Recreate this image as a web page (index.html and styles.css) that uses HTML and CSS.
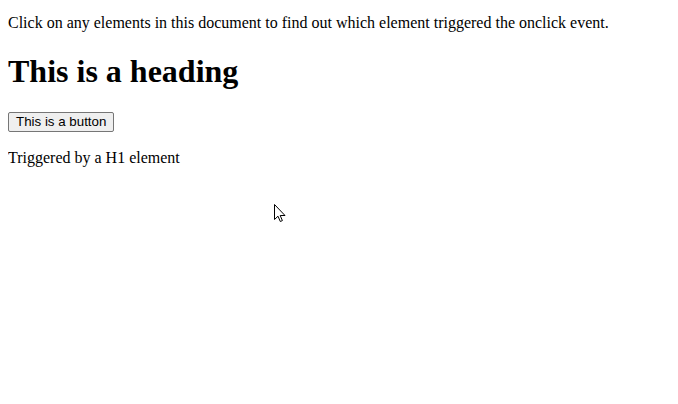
FILE: index.html
```html
<!DOCTYPE html>
<html>
<head>
<meta charset="utf-8">
<link rel="stylesheet" href="styles.css">
</head>
<body class="page">
<p class="intro">Click on any elements in this document to find out which element triggered the onclick event.</p>
<h1 class="heading">This is a heading</h1>
<button class="btn">This is a button</button>
<p class="result">Triggered by a H1 element</p>
<svg class="cursor" width="12" height="20" viewBox="0 0 12 20"><path d="M0.5 0.5 L0.5 15.5 L4 12.2 L6.3 17.5 L8.4 16.6 L6.2 11.5 L11 11.5 Z" fill="#fff" stroke="#000" stroke-width="1" stroke-linejoin="miter"/></svg>
</body>
</html>
```
FILE: styles.css
```css
html, body { background: #fff; }
.page {
  margin: 0 8px 8px;
  padding-top: 14px;
  font-family: "Liberation Serif", "Times New Roman", serif;
  font-size: 16px;
  color: #000;
}
.intro { margin: 0 0 16px; }
.result { margin: 17px 0 16px; }
.heading { font-size: 2em; margin: 0.67em 0; font-weight: bold; }
.btn {
  font-family: "Liberation Sans", Arial, sans-serif;
  font-size: 13.333px;
  padding: 1px 7px 2px;
  border: 1px solid #767676;
  border-radius: 2px;
  background: #efefef;
  color: #000;
}
.cursor { position: absolute; left: 274px; top: 204px; }
```
